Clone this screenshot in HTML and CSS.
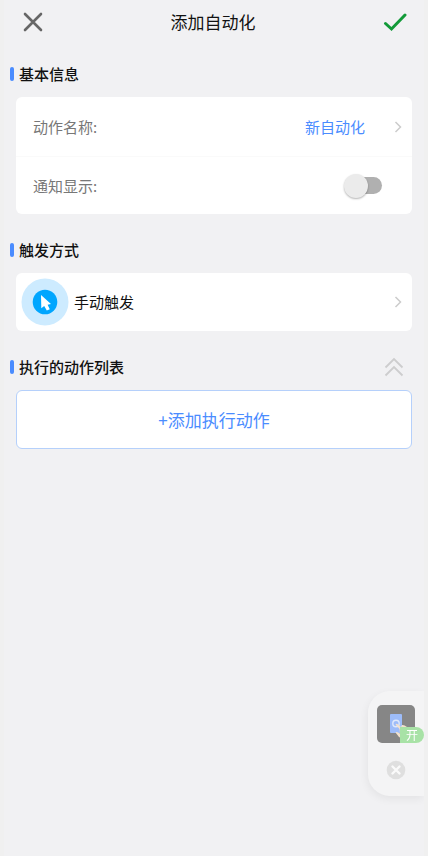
FILE: index.html
```html
<!DOCTYPE html>
<html lang="zh-CN">
<head>
<meta charset="utf-8">
<meta name="viewport" content="width=device-width, initial-scale=1">
<title>添加自动化</title>
<link rel="stylesheet" href="styles.css">
</head>
<body>
<div class="page">
  <header class="topbar">
    <button class="icon-button" type="button" aria-label="关闭">
      <svg width="20" height="20" viewBox="0 0 20 20"><path d="M2 2L18 18M18 2L2 18" fill="none" stroke="#666" stroke-width="2.6" stroke-linecap="round"/></svg>
    </button>
    <h1 class="title">添加自动化</h1>
    <button class="icon-button" type="button" aria-label="保存">
      <svg width="24" height="20" viewBox="0 0 24 20"><path d="M2.5 11.5L8.5 17L22 3" fill="none" stroke="#129a38" stroke-width="3" stroke-linecap="round" stroke-linejoin="miter"/></svg>
    </button>
  </header>

  <main>
    <section class="section">
      <div class="section-head"><h2>基本信息</h2></div>
      <div class="card">
        <button class="row" type="button">
          <span class="label">动作名称:</span>
          <span class="value">新自动化</span>
          <svg class="chevron" width="8" height="12" viewBox="0 0 8 12"><path d="M1.500 1L6.500 6L1.500 11"/></svg>
        </button>
        <div class="row">
          <label class="label" for="notify">通知显示:</label>
          <input class="switch" id="notify" type="checkbox">
        </div>
      </div>
    </section>

    <section class="section">
      <div class="section-head"><h2>触发方式</h2></div>
      <div class="card">
        <button class="row trigger" type="button">
          <svg width="48" height="48" viewBox="0 0 48 48"><circle cx="24" cy="24" r="23.500" fill="#cdebff"/><circle cx="24" cy="24" r="12.300" fill="#00a6ff"/><path d="M20 17L20.300 30.300L23.200 27.900L25.800 32.600L28.800 31.300L26.600 26.800L30 26Z" fill="#fff"/></svg>
          <span class="trigger-name">手动触发</span>
          <svg class="chevron" width="8" height="12" viewBox="0 0 8 12"><path d="M1.500 1L6.500 6L1.500 11"/></svg>
        </button>
      </div>
    </section>

    <section class="section">
      <div class="section-head">
        <h2>执行的动作列表</h2>
        <button class="icon-button" type="button" aria-label="收起">
          <svg width="20" height="20" viewBox="0 0 20 20"><path d="M1.500 10.500L10 2L18.500 10.500M1.500 18.500L10 10L18.500 18.500" fill="none" stroke="#cdcdce" stroke-width="1.800"/></svg>
        </button>
      </div>
      <button class="add" type="button">+添加执行动作</button>
    </section>
  </main>
</div>

<aside class="float">
  <button class="float-app" type="button" aria-label="自动点击">
    <svg width="38" height="38" viewBox="0 0 38 38"><rect width="38" height="38" rx="5" fill="#868686"/><rect x="13" y="9" width="12" height="19" rx="1" fill="#9dbcf9"/><circle cx="19" cy="18.500" r="3.200" fill="none" stroke="#dfe9fb" stroke-width="1.400"/><path d="M18.500 19.500Q19.500 18 21 19.500L24 22L25 20Q27 19.500 30 22V34H26L22 32L18.500 27.500Q19.500 26 23 28.500L22.500 24Z" fill="#f3e2cd"/></svg>
    <span class="badge">开</span>
  </button>
  <button class="icon-button" type="button" aria-label="关闭悬浮窗">
    <svg width="20" height="20" viewBox="0 0 20 20"><circle cx="10" cy="10" r="9.300" fill="#dfdfdf"/><path d="M6.500 6.500L13.500 13.500M13.500 6.500L6.500 13.500" stroke="#fafafa" stroke-width="2.400" stroke-linecap="round"/></svg>
  </button>
</aside>
</body>
</html>
```
FILE: styles.css
```css
* {
  box-sizing: border-box;
}

body {
  margin: 0;
  padding: 0 4px;
  min-height: 100vh;
  background: #f0f0f0;
  color: #111;
  font-family: "Noto Sans CJK SC", sans-serif;
  font-size: 15px;
  line-height: 20px;
}

button {
  margin: 0;
  padding: 0;
  border: 0;
  background: none;
  color: inherit;
  font: inherit;
}

svg {
  display: block;
}

.page {
  min-height: 100vh;
  background: #f1f1f3;
}

.topbar {
  display: flex;
  align-items: center;
  justify-content: space-between;
  height: 44px;
  margin-bottom: 8px;
  padding: 0 17px 0 19px;
}

.title {
  margin: 0;
  font-size: 17px;
  font-weight: 400;
}

.section {
  margin: 0 12px 14px;
}

.section-head {
  display: flex;
  align-items: center;
  justify-content: space-between;
  height: 45px;
  margin-left: -6px;
  padding: 0 8px 2px 0;
}

.section-head h2 {
  display: flex;
  align-items: center;
  gap: 5px;
  margin: 0;
  font-size: 15px;
  font-weight: 500;
}

.section-head h2::before {
  content: "";
  width: 4px;
  height: 14px;
  border-radius: 2px;
  background: #4a8cff;
}

.card {
  border-radius: 6px;
  background: #fff;
}

.row {
  display: flex;
  align-items: center;
  width: 100%;
  min-height: 59px;
  padding: 0 10px 0 17px;
  text-align: left;
}

.row + .row {
  min-height: 58px;
  padding-right: 30px;
  border-top: 1px solid #fafafa;
}

.label {
  flex: 1;
  color: #777;
}

.value {
  margin-right: 29px;
  color: #4a8cff;
}

.chevron path {
  fill: none;
  stroke: #ccc;
  stroke-width: 1.5;
}

.switch {
  display: flex;
  align-items: center;
  appearance: none;
  width: 34px;
  height: 17px;
  margin: 0;
  border-radius: 9px;
  background: #b0b0b0;
}

.switch::before {
  content: "";
  width: 24px;
  height: 24px;
  margin-left: -4px;
  flex: none;
  border-radius: 50%;
  background: #ebebeb;
  box-shadow: 0 1px 2px rgba(0, 0, 0, 0.3);
}

.row.trigger {
  gap: 5px;
  min-height: 58px;
  padding-left: 5px;
}

.trigger-name {
  flex: 1;
}

.add {
  display: block;
  width: 100%;
  height: 59px;
  border: 1px solid #b5d0fb;
  border-radius: 6px;
  background: #fff;
  color: #4a8cff;
  font-size: 17px;
}

.float {
  position: fixed;
  right: 4px;
  bottom: 60px;
  display: flex;
  flex-direction: column;
  align-items: center;
  gap: 17px;
  padding: 14px 9px 16px;
  border-radius: 22px 0 0 22px;
  background: #f4f4f5;
  box-shadow: -1px 3px 8px rgba(0, 0, 0, 0.06);
  clip-path: inset(-16px 0 -16px -16px);
}

.float-app {
  position: relative;
}

.badge {
  position: absolute;
  right: -9px;
  bottom: 0;
  width: 24px;
  height: 16px;
  border-radius: 0 8px 8px 0;
  background: #a8e2a6;
  color: #fff;
  font-size: 12px;
  line-height: 16px;
  text-align: center;
}
```
